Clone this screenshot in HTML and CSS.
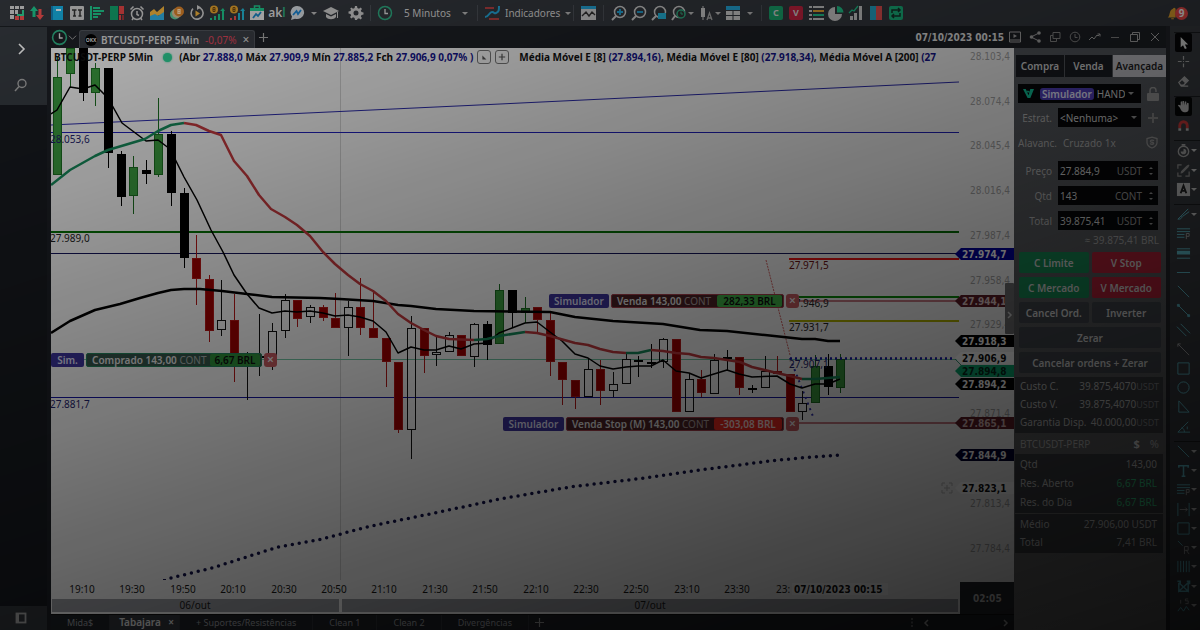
FILE: index.html
```html
<!DOCTYPE html>
<html lang="pt-BR">
<head>
<meta charset="utf-8">
<title>BTCUSDT-PERP 5Min</title>
<link rel="stylesheet" href="styles.css">
</head>
<body>
<header class="toolbar">
  <button class="tb" aria-label="Layout"><svg viewBox="0 0 16 16"><path fill="#cfcfcf" d="M1 1h4v3H1zM6 1h4v3H6zM11 1h4v3h-4zM1 5h4v4H1zM1 10h4v4H1zM6 5h3v4H6z"/><path fill="#2fcf95" d="M8 9h5v-4h2v6H8z"/><path fill="#ef4f4f" d="M6 11h4v4H6zM11 11h4v4h-4z"/></svg></button>
  <button class="tb" aria-label="Compra e venda"><svg viewBox="0 0 16 16"><path fill="#20c58c" d="M5 1l4 5H6.500v6h-3V6H1z"/><path fill="#ef4f4f" d="M11 15l4-5h-2.500V4h-3v6H7z"/></svg></button>
  <button class="tb" aria-label="Livro"><svg viewBox="0 0 16 16"><path fill="#18aee0" d="M2 1h12v14H2z"/><path fill="#1580b5" d="M2 1h2v14H2z"/><path fill="#e8f4fa" d="M7 4h5v2H7z"/></svg></button>
  <button class="tb" aria-label="Times and Trades"><svg viewBox="0 0 16 16"><rect x="1" y="1" width="14" height="14" rx="1" fill="#c9c9c9"/><path fill="none" stroke="#333" stroke-width="1.500" d="M3 5h4.500M9 5h4M5.500 5v6M11 5v6M4 11h3M9.500 11h3"/></svg></button>
  <button class="tb" aria-label="Volume"><svg viewBox="0 0 16 16"><path fill="#20c58c" d="M1 1h2v14H1zM4 2h7v2H4zM4 5h11v2H4zM4 8h8v2H4zM4 11h5v2H4z"/></svg></button>
  <button class="tb" aria-label="Mapa"><svg viewBox="0 0 16 16"><path fill="#12a06b" d="M1 1h8v14H1z"/><path fill="#e04545" d="M10 1h5v8h-5zM10 10h2v5h-2z"/><path fill="#9c3439" d="M13 10h2v5h-2z"/></svg></button>
  <button class="tb" aria-label="Alarme"><svg viewBox="0 0 16 16"><circle cx="8" cy="9" r="5.500" fill="none" stroke="#ccc" stroke-width="1.500"/><path fill="none" stroke="#ccc" stroke-width="1.500" d="M1.500 4.500l3-3M14.500 4.500l-3-3M3 15l1.500-2M13 15l-1.500-2M8 6v3.500l2 1"/></svg></button>
  <button class="tb" aria-label="Gráfico"><svg viewBox="0 0 16 16"><path fill="#f2b33d" d="M1 7l4-3 3 3 7-6v8L1 13z"/><path fill="#31aee0" d="M1 11l5-2 3 2 6-4v8H1z"/></svg></button>
  <button class="tb" aria-label="Moedas"><svg viewBox="0 0 16 16"><circle cx="6" cy="9.500" r="5" fill="#5fc79b"/><circle cx="8" cy="8" r="5" fill="#d8bd94"/><circle cx="10" cy="6.500" r="5" fill="#d9822a"/><path fill="none" stroke="#ffe2b8" stroke-width="1.200" d="M9 4.500h2v4H9zM9 6.500h2"/></svg></button>
  <button class="tb" aria-label="Replay"><svg viewBox="0 0 16 16"><path fill="none" stroke="#ccc" stroke-width="1.600" d="M9 2.200a6 6 0 1 1-5 1.500"/><path fill="#ccc" d="M8 0l4 2.300L8 5z"/><path fill="#f2b33d" d="M6.500 5.500l4.500 3-4.500 3z"/></svg></button>
  <button class="tb" aria-label="Ganhos"><svg viewBox="0 0 16 16"><circle cx="5" cy="4.500" r="4" fill="#e6a52e"/><path fill="none" stroke="#6b4710" d="M4 2.500h2v4H4zM4 4.500h2"/><path fill="#20c58c" d="M1 13h2v2H1zM5 11h2v4H5zM9 9h2v6H9zM13 5h2v10h-2zM11 6l3-3 2 3z"/></svg></button>
  <button class="tb" aria-label="Perdas"><svg viewBox="0 0 16 16"><circle cx="5" cy="4.500" r="4" fill="#e6a52e"/><path fill="none" stroke="#6b4710" d="M4 2.500h2v4H4zM4 4.500h2"/><path fill="#ef4f4f" d="M1 13h2v2H1zM5 11h2v4H5z"/><path fill="#24b7d3" d="M9 8h2v7H9zM13 5h2v10h-2zM11 6l3-3 2 3z"/></svg></button>
  <button class="tb" aria-label="Loja"><svg viewBox="0 0 16 16"><path fill="none" stroke="#20c58c" stroke-width="1.500" d="M5.500 3V1h5v2"/><rect x="1" y="3" width="14" height="12" fill="#e5e5e5"/><path fill="#20c58c" d="M1 3h14v3H1z"/><path fill="none" stroke="#1c86c5" stroke-width="1.800" d="M4 13l3-4 2 2 3-4"/></svg></button>
  <button class="tb tb-akl">ak<i>l</i></button>
  <button class="tb" aria-label="Chat"><svg viewBox="0 0 16 16"><path fill="#d7dde2" d="M8 1a7 6.500 0 1 1-2 12.700L2 15l1-3.500A6.500 6.500 0 0 1 8 1z"/><path fill="none" stroke="#1c86d5" stroke-width="1.800" d="M4 10l3.500-4L9 9l3-4"/></svg></button>
  <i class="caret"></i>
  <button class="tb" aria-label="Cursos"><svg viewBox="0 0 16 16"><path fill="#ccc" d="M8 2l8 4-8 4-8-4zM3 9l5 2.500L13 9v3c-2 3-8 3-10 0zM14 7h1v6h-1z"/></svg></button>
  <button class="tb tb-gear" aria-label="Configurações"><svg viewBox="0 0 16 16"><path fill="#ccc" fill-rule="evenodd" d="M7 1h2l.4 2 1.600.7L12.700 2.500l1.300 1.400-1.200 1.700.7 1.500 2 .4v2l-2 .4-.7 1.600 1.200 1.600-1.400 1.400-1.600-1.200-1.600.7L9 15H7l-.4-2-1.600-.7-1.600 1.200L2 12l1.200-1.500-.7-1.600-2-.4v-2l2-.4.7-1.500L2 3.900l1.400-1.400L5 3.700 6.600 3zM8 5.500a2.500 2.500 0 1 0 0 5 2.500 2.500 0 0 0 0-5z"/></svg></button>
  <span class="sep"></span>
  <button class="tb-period"><svg viewBox="0 0 16 16"><circle cx="8" cy="8" r="6.500" fill="none" stroke="#2fae83" stroke-width="1.500"/><path fill="none" stroke="#ddd" stroke-width="1.300" d="M8 4v4.500h3"/></svg><span>5 Minutos</span><i class="caret"></i></button>
  <span class="sep"></span>
  <button class="tb-ind"><svg viewBox="0 0 16 16"><path fill="none" stroke="#e04545" stroke-width="1.600" d="M1 3h9M5 14h10"/><path fill="none" stroke="#24a6d8" stroke-width="2" d="M1 12c4 0 4-5 7-5s1 2 4 1 3-3 3-7"/></svg><span>Indicadores</span><i class="caret"></i></button>
  <span class="sep"></span>
  <button class="tb" aria-label="Tela"><svg viewBox="0 0 16 16"><path fill="#d0d0d0" d="M1 1h15v14H1z"/><path fill="#24a6d8" d="M1 1h15v3H1z"/><path fill="none" stroke="#333" stroke-width="1.400" d="M2 11l4-4 3 4 3-4 3 3"/></svg></button>
  <span class="sep sep-wide"></span>
  <button class="tb" aria-label="Mais zoom"><svg viewBox="0 0 16 16"><circle cx="9" cy="7" r="5.500" fill="none" stroke="#ccc" stroke-width="1.500"/><path stroke="#ccc" stroke-width="2" d="M5 11l-4 4"/><path stroke="#24a6d8" stroke-width="1.800" d="M6 7h6M9 4v6"/></svg></button>
  <button class="tb" aria-label="Menos zoom"><svg viewBox="0 0 16 16"><circle cx="9" cy="7" r="5.500" fill="none" stroke="#ccc" stroke-width="1.500"/><path stroke="#ccc" stroke-width="2" d="M5 11l-4 4"/><path stroke="#24a6d8" stroke-width="1.800" d="M6 7h6"/></svg></button>
  <button class="tb" aria-label="Zoom de área"><svg viewBox="0 0 16 16"><circle cx="9" cy="7" r="5.500" fill="none" stroke="#ccc" stroke-width="1.500"/><path stroke="#ccc" stroke-width="2" d="M5 11l-4 4"/><path fill="#24b3d8" d="M7 8h8v6H7z"/></svg></button>
  <button class="tb" aria-label="Zoom de tempo"><svg viewBox="0 0 16 16"><circle cx="8" cy="7" r="5.500" fill="none" stroke="#ccc" stroke-width="1.500"/><path stroke="#ccc" stroke-width="2" d="M4 11l-3 4"/><circle cx="10" cy="9" r="4" fill="#333" stroke="#2fae83" stroke-width="1.500"/><path fill="none" stroke="#2fae83" d="M10 6.500V9h2"/></svg></button>
  <i class="caret tight"></i>
  <button class="tb" aria-label="Tipo de gráfico"><svg viewBox="0 0 16 16"><path fill="#ccc" d="M3 3h4v9H3zM4.500 1h1v14h-1z"/><path fill="none" stroke="#aaa" stroke-width="1.300" d="M9 15l2.500-7L14 15M10 13h3.500"/></svg></button>
  <i class="caret tight"></i>
  <button class="tb" aria-label="Grade"><svg viewBox="0 0 16 16"><path fill="#24a6d8" d="M1 1h14v4H1z"/><path fill="#d0d0d0" d="M1 6h6.500v4H1zM8.500 6H15v4H8.500zM1 11h6.500v4H1zM8.500 11H15v4H8.500z"/></svg></button>
  <i class="caret"></i>
  <span class="sep"></span>
  <button class="tb tb-box buy">C</button>
  <button class="tb tb-box sell">V</button>
  <button class="tb" aria-label="Lista"><svg viewBox="0 0 16 16"><path fill="#ccc" d="M1 1h3v2H1zM1 5h3v2H1zM1 9h3v2H1zM1 13h3v2H1zM5 1h11v2H5zM5 13h11v2H5z"/><path fill="#e6a52e" d="M5 5h11v2H5z"/><path fill="#20c58c" d="M5 9h11v2H5z"/></svg></button>
  <button class="tb" aria-label="Pizza"><svg viewBox="0 0 16 16"><path fill="#ccc" d="M7 2v7h7A7 7 0 1 1 7 2z"/><path fill="#20c58c" d="M9 1a6.500 6.500 0 0 1 6.500 6.500H9z"/></svg></button>
  <button class="tb" aria-label="Desempenho"><svg viewBox="0 0 16 16"><path fill="#ccc" d="M2 11h3v4H2zM6 8h3v7H6zM11 1h3v14h-3z"/><path fill="none" stroke="#20c58c" stroke-width="1.300" d="M1 8l3-3 2 1 4-5"/></svg></button>
  <button class="tb" aria-label="Book"><svg viewBox="0 0 16 16"><path fill="#24a6c8" d="M2 1h6v14H2z"/><path fill="#e04f4f" d="M8 1h6v14H8z"/></svg></button>
  <button class="tb" aria-label="Trocar"><svg viewBox="0 0 16 16"><rect x="1" y="1" width="14" height="14" rx="2" fill="#19b37c"/><path fill="none" stroke="#15332a" stroke-width="1.500" d="M4 8V5h8M12 8v3H4M10 3l2 2-2 2M6 9l-2 2 2 2"/></svg></button>
  <button class="bell" aria-label="9 notificações"><svg viewBox="0 0 16 16"><path fill="#e6a52e" d="M2 13c3-2 1-8 6-10 1-2 3-1 3 1v9zM6 14h3v1H6z"/></svg><b>9</b></button>
</header>

<div class="workspace">
  <nav class="rail">
    <button aria-label="Expandir"><svg viewBox="0 0 16 16"><path fill="none" stroke="#fff" stroke-width="1.600" d="M6 3l5 5-5 5"/></svg></button>
    <button aria-label="Buscar"><svg viewBox="0 0 16 16"><circle cx="9" cy="6.500" r="4" fill="none" stroke="#aaa" stroke-width="1.400"/><path stroke="#aaa" stroke-width="1.500" d="M6 9.500L2 14"/></svg></button>
    <button class="rail-foot" aria-label="Painel"><svg viewBox="0 0 16 16"><rect x="3.500" y="3.500" width="9" height="9" fill="none" stroke="#aaa" stroke-width="1.800"/><path stroke="#aaa" stroke-width="2" d="M5 3v10"/></svg></button>
  </nav>

  <main class="window">
    <div class="titlebar">
      <button class="clock" aria-label="Período"><svg viewBox="0 0 16 16"><circle cx="8" cy="8" r="6.500" fill="none" stroke="#2fae83" stroke-width="1.500"/><path fill="none" stroke="#ddd" stroke-width="1.300" d="M8 4v4.500h3"/></svg><svg class="chev" viewBox="0 0 10 10"><path fill="none" stroke="#aaa" d="M1 3l4 4 4-4"/></svg></button>
      <div class="doc-tab"><span class="okx">OKX</span><b>BTCUSDT-PERP 5Min</b><span class="neg">-0,07%</span><button aria-label="Fechar aba">×</button></div>
      <button class="plus" aria-label="Nova aba"><svg viewBox="0 0 10 10"><path stroke="#aaa" stroke-width="1.300" d="M5 0v10M0 5h10"/></svg></button>
      <time>07/10/2023 00:15</time>
      <div class="win-buttons">
        <button aria-label="Vídeo"><svg viewBox="0 0 12 12"><path fill="none" stroke="#aaa" d="M.5 1h11v10H.5zM0 9h12" /><path fill="#aaa" d="M4.500 3l3.500 2-3.500 2z"/></svg></button>
        <button aria-label="Compartilhar"><svg viewBox="0 0 12 12"><path fill="none" stroke="#aaa" d="M10 2L2 6l8 4"/><circle cx="10" cy="2" r="1.800" fill="#aaa"/><circle cx="2.500" cy="6" r="1.800" fill="#aaa"/><circle cx="10" cy="10" r="1.800" fill="#aaa"/></svg></button>
        <button aria-label="Duplicar"><svg viewBox="0 0 12 12"><path fill="none" stroke="#888" d="M4 1.500h7v6H4zM4 4.500H1.500v6h6v-3"/></svg></button>
        <button aria-label="Tempo"><svg viewBox="0 0 12 12"><circle cx="6" cy="6" r="4.800" fill="none" stroke="#888"/><path fill="none" stroke="#888" d="M6 3v3.500h2.500"/></svg></button>
        <button aria-label="Tendência"><svg viewBox="0 0 12 12"><path fill="none" stroke="#aaa" d="M0 9l3-3 2 2 3-4 1 1 2-2M8.500 3H11v2.500"/></svg></button>
        <button aria-label="Minimizar"><svg viewBox="0 0 12 12"><path stroke="#888" d="M2 6.500h8"/></svg></button>
        <button aria-label="Restaurar"><svg viewBox="0 0 12 12"><path fill="none" stroke="#aaa" d="M1.500 3.500h7v7h-7zM3.500 3.500v-2h7v7h-2"/></svg></button>
        <button aria-label="Fechar"><svg viewBox="0 0 12 12"><path stroke="#aaa" d="M2 2l8 8M10 2l-8 8"/></svg></button>
      </div>
    </div>

    <div class="window-body">
      <section class="chart-col">
        <div class="chart">
          <svg id="chart" class="chart-svg" viewBox="51 48 963 566" role="img" aria-label="Gráfico de candles"></svg>
          <div class="legend">
            <b>BTCUSDT-PERP 5Min</b><i class="dot"></i>
            <b>(Abr <em>27.888,0</em> Máx <em>27.909,9</em> Mín <em>27.885,2</em> Fch <em>27.906,9 0,07% )</em></b>
            <button aria-label="Recolher"><svg viewBox="0 0 10 10"><path fill="#555" d="M3 3l5 5H3z"/></svg></button><button aria-label="Adicionar"><svg viewBox="0 0 10 10"><path stroke="#555" stroke-width="1.500" d="M5 1v8M1 5h8"/></svg></button>
            <b class="avg">Média Móvel E [8] <em>(27.894,16)</em>, Média Móvel E [80] <em>(27.918,34)</em>, Média Móvel A [200] <em>(27</em></b>
          </div>
        </div>
        <footer class="sheets">
          <a href="#">Mida$</a>
          <a href="#" class="on">Tabajara <span>×</span></a>
          <a href="#">+ Suportes/Resistências</a>
          <a href="#">Clean 1</a>
          <a href="#">Clean 2</a>
          <a href="#">Divergências</a>
          <button aria-label="Nova planilha"><svg viewBox="0 0 10 10"><path stroke="#999" stroke-width="1.300" d="M5 0v10M0 5h10"/></svg></button>
          <span class="pager"><svg viewBox="0 0 10 10"><path stroke="#aaa" stroke-dasharray="2 1.500" d="M5 0v10"/></svg><svg viewBox="0 0 10 10"><path fill="none" stroke="#aaa" stroke-width="1.500" d="M7 2L4 5l3 3"/></svg><i></i><svg viewBox="0 0 10 10"><path fill="none" stroke="#aaa" stroke-width="1.500" d="M3 2l3 3-3 3"/></svg></span>
        </footer>
      </section>

      <aside class="panel">
        <div class="modes"><button>Compra</button><button>Venda</button><button class="on">Avançada</button></div>
        <div class="account">
          <div class="dark-box"><svg viewBox="0 0 12 12"><path fill="#11c39a" d="M0 1h3l3 7 1-3H5L4 3h2l1 1 1-3h4L8 11H5z"/></svg><mark>Simulador</mark><select aria-label="Conta"><option>HAND</option></select><i class="caret"></i></div>
          <button aria-label="Bloquear"><svg viewBox="0 0 12 14"><path fill="none" stroke="#999" stroke-width="1.500" d="M3 6V3.500a3 3 0 0 1 6 0V5"/><rect y="6" width="12" height="8" rx="1" fill="#999"/></svg></button>
        </div>
        <div class="field"><label for="est">Estrat.</label><div class="dark-box"><select id="est"><option>&lt;Nenhuma&gt;</option></select><i class="caret"></i></div><button aria-label="Nova estratégia"><svg viewBox="0 0 10 10"><path stroke="#888" stroke-width="2" d="M5 0v10M0 5h10"/></svg></button></div>
        <div class="leverage"><span>Alavanc.</span><span>Cruzado 1x</span><svg viewBox="0 0 12 12"><path fill="none" stroke="#999" stroke-width="1.300" d="M6 .7L11 2v4c0 3-2.500 4.500-5 5.500C3.500 10.500 1 9 1 6V2zM8 4.300c-1-1-4-.8-3.500.7.4 1 3.200.5 3.200 1.800s-2.700 1.200-3.700.2"/></svg></div>
        <div class="field"><label for="pr">Preço</label><div class="dark-box"><input id="pr" value="27.884,9"><span>USDT</span><i class="spin"></i></div></div>
        <div class="field"><label for="qt">Qtd</label><div class="dark-box"><input id="qt" value="143"><span>CONT</span><i class="spin"></i></div></div>
        <div class="field"><label for="tt">Total</label><div class="dark-box"><input id="tt" value="39.875,41"><span>USDT</span><i class="spin"></i></div></div>
        <p class="approx">≈ 39.875,41 BRL</p>
        <div class="actions">
          <button class="buy">C Limite</button><button class="sell">V Stop</button>
          <button class="buy">C Mercado</button><button class="sell">V Mercado</button>
          <button>Cancel Ord.</button><button>Inverter</button>
          <button class="wide">Zerar</button>
          <button class="wide">Cancelar ordens + Zerar</button>
        </div>
        <dl class="costs">
          <div><dt>Custo C.</dt><dd>39.875,4070<i>USDT</i></dd></div>
          <div><dt>Custo V.</dt><dd>39.875,4070<i>USDT</i></dd></div>
          <div><dt>Garantia Disp.</dt><dd>40.000,00<i>USDT</i></dd></div>
        </dl>
        <div class="asset"><span>BTCUSDT-PERP</span><button class="on">$</button><button>%</button></div>
        <dl class="costs result">
          <div><dt>Qtd</dt><dd>143,00</dd></div>
          <div><dt>Res. Aberto</dt><dd class="pos">6,67 BRL</dd></div>
          <div><dt>Res. do Dia</dt><dd class="pos">6,67 BRL</dd></div>
        </dl>
        <dl class="costs totals">
          <div><dt>Médio</dt><dd>27.906,00 USDT</dd></div>
          <div><dt>Total</dt><dd>7,41 BRL</dd></div>
        </dl>
      </aside>
    </div>
  </main>

  <nav class="tools">
    <div class="g3">
      <button class="on" aria-label="Cursor"><svg viewBox="0 0 16 16"><path fill="#ddd" d="M5 2l8 8H9.500l2 4-2 1-2-4L5 13z"/></svg></button>
      <button aria-label="Cruz"><svg viewBox="0 0 16 16"><path stroke="#aaa" stroke-width="1.300" d="M8 2v4M8 10v4M2 8h4M10 8h4M7.500 8h1"/></svg></button>
      <button aria-label="Borracha"><svg viewBox="0 0 16 16"><path fill="none" stroke="#aaa" stroke-width="1.400" d="M3 9l6-6 4 4-5 5H5zM5 13h8"/><path fill="#aaa" d="M6 6l4 4 3-3-4-4z"/></svg></button>
    </div>
    <div class="g2">
      <button class="on" aria-label="Mover"><svg viewBox="0 0 16 16"><path fill="#bbb" d="M4 9L2 7l1-1 2 1V3l1.500-.5L7 7V2h1.500v5L9.500 2.500 11 3v4l1-3 1.500.5V10c0 4-2 4-5 4-2 0-3-2-4.500-5z"/></svg></button>
      <button aria-label="Ímã"><svg viewBox="0 0 16 16"><path fill="none" stroke="#d03c3c" stroke-width="3" d="M4 11V8a4 4 0 0 1 8 0v3"/><path stroke="#bbb" stroke-width="3" d="M4 11v2.500M12 11v2.500"/></svg></button>
    </div>
    <div class="g3 more">
      <button aria-label="Cronômetro"><svg viewBox="0 0 16 16"><circle cx="8" cy="9" r="5.500" fill="none" stroke="#aaa" stroke-width="1.500"/><path fill="#aaa" d="M8 6a3 3 0 1 1-3 3h3zM6 1h4v2H6z"/></svg></button>
      <button aria-label="Desenhar"><svg viewBox="0 0 16 16"><path fill="none" stroke="#999" stroke-width="1.300" d="M2 6V2h4M2 10v4h4M14 9v5h-4M5 11L14 2" /><path stroke="#999" stroke-width="2.500" d="M6 10l7-7"/></svg></button>
      <button aria-label="Texto"><svg viewBox="0 0 16 16"><path fill="#c4c4c4" d="M1 1h14v14H1z"/><path fill="none" stroke="#222" stroke-width="2" d="M5 12l3-8 3 8M6 9.500h4"/></svg></button>
    </div>
    <div class="g12 teal">
      <button class="drop" aria-label="Pincel"><svg viewBox="0 0 16 16"><path d="M2 13c3 0 5-1 4-4L13 2M7 10l7-5M2 13l4-4"/></svg></button>
      <button aria-label="Níveis P"><svg viewBox="0 0 16 16"><path d="M1 3h14M1 6h14M1 9h8M1 12h8"/><path stroke="#aaa" d="M11 14V8h3v3h-3"/></svg></button>
      <button aria-label="Níveis"><svg viewBox="0 0 16 16"><path stroke-width="2" d="M1 6h14M1 8h14"/><path d="M1 3h14M1 13h14"/></svg></button>
      <button aria-label="Horizontal"><svg viewBox="0 0 16 16"><path d="M1 8h14"/></svg></button>
      <button aria-label="Linha"><svg viewBox="0 0 16 16"><path d="M2 2l12 12"/></svg></button>
      <button aria-label="Segmento"><svg viewBox="0 0 16 16"><path d="M2 2l12 12M1.500 1.500h2v2h-2zM12.500 12.500h2v2h-2z"/></svg></button>
      <button aria-label="Canal"><svg viewBox="0 0 16 16"><path d="M1 5l10 10M5 2l10 10"/></svg></button>
      <button aria-label="Seta"><svg viewBox="0 0 16 16"><path stroke="#aaa" d="M2 2l12 12M2 5V2h3"/></svg></button>
      <button aria-label="Retângulo"><svg viewBox="0 0 16 16"><path d="M2 2h12v12H2z"/></svg></button>
      <button aria-label="Círculo"><svg viewBox="0 0 16 16"><circle cx="8" cy="8" r="6"/></svg></button>
      <button aria-label="Triângulo"><svg viewBox="0 0 16 16"><path d="M3 2v12h11z"/></svg></button>
      <button aria-label="Ângulo"><svg viewBox="0 0 16 16"><path d="M13 3L2 14h13M6 9c2 1 3 3 3 5M12 8v3"/></svg></button>
    </div>
    <div class="g9 teal more">
      <button aria-label="Linhas"><svg viewBox="0 0 16 16"><path d="M2 2l12 12"/></svg></button>
      <button aria-label="Textos"><svg viewBox="0 0 16 16"><path stroke-width="1.600" d="M3 5V3h10v2M8 3v11M6 14h4"/></svg></button>
      <button aria-label="Fibonacci P"><svg viewBox="0 0 16 16"><path d="M1 3h14M1 6h14M1 9h8M1 12h8"/><path stroke="#aaa" d="M11 14V8h3v3h-3"/></svg></button>
      <button aria-label="Medida"><svg viewBox="0 0 16 16"><path d="M2 1v14M14 1v14"/><path stroke="#aaa" d="M4 8h8M10 6l2 2-2 2"/></svg></button>
      <button aria-label="Formas"><svg viewBox="0 0 16 16"><path d="M2 2h12v12H2z"/></svg></button>
      <button aria-label="Régua R"><svg viewBox="0 0 16 16"><path d="M2 1l5 5"/><path stroke="#aaa" d="M9 15V7h4v4H9M11 11l3 4"/></svg></button>
      <button aria-label="Ciclos"><svg viewBox="0 0 16 16"><path d="M2 2v12M5 2v12M8 2v12M11 2v12M14 2v12"/></svg></button>
      <button aria-label="Padrões"><svg viewBox="0 0 16 16"><path stroke-width="1.600" d="M3 4v9l10-9v9L3 4M3 13h10M1.500 2.500h3v3M11.500 2.500h3v3"/></svg></button>
      <button aria-label="Ondas"><svg viewBox="0 0 16 16"><path d="M2 14l3-4 3 4 3-5 3 4"/><path stroke="#aaa" d="M5 2v4M13 1h-3v2h3v3h-3"/></svg></button>
    </div>
  </nav>
</div>
<script src="chart.js"></script>
</body>
</html>
```
FILE: styles.css
```css
* { box-sizing: border-box; }
body {
  margin: 0;
  height: 100vh;
  display: flex;
  flex-direction: column;
  overflow: hidden;
  background: #1d2026;
  color: #d4d4d4;
  font: 10px/14px "Noto Sans", "Open Sans", sans-serif;
}
/* night veil over the whole workspace */
body::after {
  content: "";
  position: fixed;
  inset: 0;
  pointer-events: none;
  background: linear-gradient(162deg, rgba(0,0,0,.24), rgba(0,0,0,.84));
}
button { border: 0; padding: 0; background: none; color: inherit; font: inherit; display: flex; align-items: center; justify-content: center; white-space: nowrap; }
svg { display: block; }
a { color: inherit; text-decoration: none; }
.caret { border: 3px solid transparent; border-top-color: #bbb; border-bottom: 0; flex: none; }

.toolbar { display: flex; align-items: center; height: 26px; padding: 0 12px 0 9px; gap: 4px; background: #34383e; flex: none; }
.tb, .tb svg, .tb-period svg, .tb-ind svg { width: 16px; height: 16px; flex: none; }
.tb-akl { font-size: 12px; font-weight: 600; color: #ddd; }
.tb-akl i { color: #2fae83; font-style: normal; }
.toolbar > .caret { margin: 0 2px; }
.toolbar > .caret.tight { margin: 0 0 0 -3px; }
.tb-gear { margin-left: 5px; }
.sep { width: 1px; height: 16px; background: #4c5057; margin: 0 2px; flex: none; }
.sep-wide { margin: 0 3px; }
.tb-period { gap: 11px; width: 94px; justify-content: flex-start; }
.tb-ind { gap: 5px; width: 83px; justify-content: flex-start; }
.tb-period .caret, .tb-ind .caret { margin: 0 4px 0 auto; }
.tb-box { border-radius: 2px; font-weight: 700; font-size: 9px; width: 14px; height: 14px; margin: 0 1px; }
.tb-box.buy { background: #1aa46d; }
.tb-box.sell { background: #c52440; }
.bell { margin-left: auto; }
.bell svg { width: 14px; height: 14px; margin-right: -5px; }
.bell b { width: 13px; height: 13px; line-height: 13px; border-radius: 7px; background: #f04a4a; color: #fff; }

.workspace { flex: 1; display: flex; min-height: 0; }
.rail { width: 47px; display: flex; flex-direction: column; background: linear-gradient(#363b41 78px, #181b20 78px); border-top: 1px solid #1c1f24; flex: none; }
.rail button { height: 36px; padding: 8px 5px 0 0; }
.rail svg { width: 16px; height: 16px; }
.rail .rail-foot { margin-top: auto; height: 24px; padding: 0 5px 0 0; background: #33373c; }

.window { flex: 1; display: flex; flex-direction: column; min-width: 0; margin-left: 4px; }
.titlebar { height: 22px; display: flex; align-items: center; background: #1e2126; flex: none; }
.clock svg { width: 17px; height: 17px; }
.clock .chev { width: 9px; height: 9px; }
.doc-tab { align-self: flex-end; height: 18px; margin-left: 2px; padding: 0 5px; display: flex; align-items: center; gap: 4px; background: #3a3e45; border: 1px solid #50545b; border-bottom: 0; border-radius: 3px 3px 0 0; }
.doc-tab b { font-weight: 600; white-space: nowrap; }
.okx { width: 12px; height: 12px; border-radius: 50%; background: #000; color: #ddd; font-size: 5px; line-height: 12px; text-align: center; font-weight: 700; }
.neg { color: #e0465c; margin: 0 2px; }
.doc-tab button { font-size: 12px; }
.plus { margin-left: 4px; }
.plus svg, .sheets button svg { width: 9px; height: 9px; }
time { margin-left: auto; font: 700 10px "DejaVu Sans Condensed", "DejaVu Sans", sans-serif; color: #e4e4e4; white-space: nowrap; }
.win-buttons { display: flex; gap: 8px; padding: 0 5px 0 5px; }
.win-buttons svg { width: 12px; height: 12px; }
.window-body { flex: 1; display: flex; min-height: 0; }
.chart-col { flex: 1; display: flex; flex-direction: column; min-width: 0; }
.chart { flex: 1; position: relative; min-height: 0; background: #f2f2f2; }
.chart-svg { width: 100%; height: 100%; }
.legend { position: absolute; top: 1px; left: 3px; right: 55px; display: flex; align-items: center; gap: 4px; height: 16px; overflow: hidden; white-space: nowrap; color: #111; }
.legend b { font-weight: 700; }
.legend em { font-style: normal; color: #14148a; }
.dot { width: 9px; height: 9px; margin: 0 3px 0 6px; border-radius: 50%; background: #2fcf95; box-shadow: 0 0 2px #2fcf95; flex: none; }
.legend button { width: 14px; height: 14px; border: 1px solid #777; border-radius: 3px; flex: none; }
.legend button svg { width: 8px; height: 8px; }
.legend .avg { margin-left: 6px; }
.sheets { height: 16px; display: flex; align-items: center; background: #1f2227; border-top: 1px solid #111; color: #9a9da2; font-size: 9px; flex: none; }
.sheets a { padding: 0 16px; height: 15px; line-height: 15px; border-right: 1px solid #2f3237; white-space: nowrap; }
.sheets .on { background: #33363c; color: #e0e0e0; font-size: 10px; font-weight: 600; padding: 0 5px 0 9px; }
.sheets .on span { margin-left: 5px; }
.sheets button { margin-left: 6px; }
.pager { margin-left: auto; display: flex; gap: 4px; padding-right: 3px; }
.pager svg { width: 10px; height: 10px; }
.pager i { width: 62px; }

.panel { width: 152px; padding-top: 7px; flex: none; overflow: hidden; display: flex; flex-direction: column; background: linear-gradient(#55595f, #5a5b5d 60%, #6c6c6c); }
.modes { display: grid; grid-template-columns: 48px 47px 1fr; gap: 1px; margin: 0 0 7px 2px; }
.modes button { height: 22px; background: #1b1e24; font-weight: 600; }
.modes .on { background: #c4c4ca; color: #1d1d22; }
.dark-box { background: #07080a; display: flex; align-items: center; height: 19px; min-width: 0; }
.account { display: flex; align-items: center; margin: 0 7px 5px 4px; gap: 6px; }
.account .dark-box { flex: 1; padding: 0 5px; gap: 3px; }
.account .dark-box svg { width: 11px; height: 11px; margin-right: 3px; }
.account button svg { width: 12px; height: 14px; }
mark { background: #5140bd; color: #e8e8ff; border-radius: 3px; padding: 0 2px; line-height: 12px; font-weight: 600; }
select, input { appearance: none; border: 0; background: none; color: #d2d2d2; font: inherit; padding: 0; min-width: 0; width: 0; flex: 1; }
.field { display: flex; align-items: center; margin: 0 8px 6px 0; }
.field label { width: 41px; text-align: right; padding-right: 3px; margin-right: 3px; color: #b4b4b4; flex: none; }
.field .dark-box { flex: 1; padding: 0 2px; }
.field .dark-box span { color: #9e9e9e; margin-right: 7px; }
.field button { margin-left: 7px; }
.field button svg { width: 10px; height: 10px; }
.field .dark-box .caret, .account .caret { border-top-color: #999; margin-right: 2px; }
.spin { display: grid; gap: 4px; margin-right: 3px; }
.spin::before, .spin::after { content: ""; border: 2px solid transparent; }
.spin::before { border-top: 0; border-bottom-color: #999; }
.spin::after { border-bottom: 0; border-top-color: #999; }
.leverage { display: flex; gap: 6px; margin: 3px 8px 11px 4px; color: #b0b0b0; }
.leverage svg { width: 12px; height: 13px; margin-left: auto; }
.approx { margin: -3px 7px 5px; text-align: right; color: #a8a8a8; }
.actions { display: grid; grid-template-columns: 1fr 1fr; gap: 4px 3px; padding: 0 5px; }
.actions button { height: 21px; border-radius: 2px; background: #42464d; color: #d6d6d6; font-weight: 600; }
.actions .buy { background: #178a55; }
.actions .sell { background: #b62239; }
.actions .wide { grid-column: 1 / -1; }
.costs { margin: 4px 3px 0 1px; padding: 0 4px 2px 5px; background: #3b3d41; color: #bcbcbc; }
.costs div { display: flex; justify-content: space-between; height: 18px; align-items: center; }
.costs dd { margin: 0; }
.costs i { font-style: normal; font-size: 9px; color: #85878c; }
.asset { display: flex; align-items: center; height: 21px; padding: 0 7px 0 6px; color: #b4b4b4; }
.asset span { margin-right: auto; }
.asset button { margin-left: 10px; font-size: 11px; }
.asset .on { font-weight: 700; color: #ddd; }
.costs.result, .costs.totals { margin-top: 0; padding-right: 6px; }
.result div { height: 19px; }
.costs.totals { border-top: 1px solid #6a6a6a; padding-top: 1px; }
.costs .pos { color: #34cc86; }

.tools { width: 34px; padding: 6px 0 15px 4px; display: flex; flex-direction: column; gap: 5px; background: #393c41; border-left: 4px solid #24262b; flex: none; }
.tools div { display: flex; flex-direction: column; flex: 1 1 0; border-top: 1px solid #1b1d20; min-height: 0; }
.tools .g2 { flex-grow: 2; }
.tools .g3 { flex-grow: 3; }
.tools .g9 { flex-grow: 9; }
.tools .g12 { flex-grow: 12; }
.tools button { flex: 1; width: 17px; margin-left: 1px; position: relative; min-height: 0; }
.tools .on { background: #060708; border-radius: 2px; }
.tools svg { width: 15px; height: 15px; }
.teal svg { fill: none; stroke: #62c4d4; }
.more button::after, .tools .drop::after { content: ""; position: absolute; left: 16px; border: 3px solid transparent; border-top-color: #ccc; border-bottom: 0; }

/* chart drawing */
.ax { font: 10px "DejaVu Sans Condensed", "DejaVu Sans", sans-serif; fill: #a3a3a3; text-anchor: end; }
.tag { font: 700 10px "DejaVu Sans Condensed", "DejaVu Sans", sans-serif; }
.tick { font: 10px "Noto Sans", sans-serif; fill: #1a1a1a; text-anchor: middle; }
.lv { font: 10px "Noto Sans", sans-serif; }
.line { fill: none; stroke-linejoin: round; }
.order { display: flex; gap: 2px; height: 14px; font-size: 10px; font-weight: 600; line-height: 12px; white-space: nowrap; }
.order > span { border-radius: 2px; height: 14px; }
.order .who { background: #3d349b; color: #dcdcf0; padding: 1px 0; text-align: center; }
.order .what { flex: 1; display: flex; justify-content: space-between; border: 1px solid; padding: 0 1px 0 5px; color: #e2e2e2; }
.order .what i { font-style: normal; font-weight: 400; opacity: .65; }
.order .what b { font-weight: 600; text-align: center; border-radius: 2px; color: #0e0e0e; }
.order.long .what { background: #35554a; border-color: #23805a; }
.order.short .what { background: #4d2226; border-color: #a53f4c; }
.order.long b { background: #2f8f3a; }
.order.gain b { background: #41b449; }
.order.loss b { background: #e8281f; color: #f5d7d7; }
.order button { width: 13px; height: 14px; border-radius: 3px; background: #c45b60; color: #eee; font-size: 12px; line-height: 12px; flex: none; }
```
FILE: chart.js
```js
// x, open/close top, bottom, wick top, wick bottom, kind (g green, k black, r red, w hollow)
const candles = [
  [57, 77, 175, 57, 175, "g"], [70, 48, 74, 48, 88, "g"], [83, 48, 93, 48, 101, "k"], [95, 68, 93, 63, 106, "g"],
  [108, 68, 153, 68, 168, "k"], [121, 154, 197, 151, 206, "k"], [133, 167, 196, 156, 214, "g"], [146, 170, 174, 160, 184, "k"],
  [158, 134, 175, 98, 177, "g"], [171, 134, 193, 131, 206, "k"], [184, 193, 258, 188, 268, "k"], [196, 258, 279, 235, 305, "r"],
  [209, 279, 331, 275, 342, "r"], [221, 320, 330, 280, 336, "w"], [234, 320, 357, 294, 382, "r"], [247, 356, 357, 352, 400, "w"],
  [259, 356, 357, 314, 376, "w"], [272, 331, 356, 323, 370, "w"], [285, 300, 331, 294, 338, "w"], [297, 300, 319, 300, 327, "r"],
  [310, 307, 317, 305, 323, "w"], [323, 307, 318, 305, 321, "r"], [335, 318, 328, 293, 328, "r"], [348, 307, 328, 301, 356, "w"],
  [360, 307, 328, 278, 335, "r"], [373, 328, 338, 290, 338, "r"], [386, 338, 362, 338, 387, "r"], [398, 362, 430, 362, 433, "r"],
  [411, 328, 430, 316, 459, "w"], [424, 328, 356, 328, 373, "r"], [436, 352, 355, 336, 366, "w"], [449, 335, 352, 332, 352, "w"],
  [461, 335, 356, 335, 356, "r"], [474, 324, 357, 323, 367, "w"], [487, 324, 345, 321, 360, "k"], [499, 290, 344, 284, 344, "g"],
  [512, 290, 313, 290, 328, "k"], [525, 308, 313, 297, 323, "g"], [537, 307, 320, 307, 332, "r"], [550, 320, 362, 312, 376, "r"],
  [562, 362, 380, 362, 405, "r"], [575, 380, 397, 380, 409, "r"], [588, 369, 397, 358, 397, "w"], [600, 369, 391, 360, 405, "r"],
  [613, 384, 391, 372, 397, "w"], [626, 359, 384, 354, 384, "w"], [638, 360, 362, 356, 377, "k"], [651, 362, 363, 344, 368, "k"],
  [663, 339, 362, 338, 368, "w"], [676, 339, 412, 339, 412, "r"], [689, 379, 412, 373, 412, "w"], [701, 379, 393, 370, 397, "r"],
  [714, 360, 394, 354, 394, "w"], [727, 357, 358, 350, 370, "k"], [739, 357, 388, 357, 395, "r"], [752, 388, 389, 385, 393, "k"],
  [765, 371, 388, 356, 388, "w"], [777, 371, 374, 356, 374, "r"], [790, 374, 412, 374, 412, "r"], [802, 403, 412, 391, 420, "w"],
  [815, 366, 403, 355, 403, "g"], [828, 366, 387, 354, 395, "k"], [840, 359, 388, 354, 393, "g"]
];
const tone = { g: ["#3b9a3f", "#1c6e22"], k: ["#000", "#000"], r: ["#a00000", "#b41818"], w: ["none", "#111"] };

const fast = "51,114 57,110 70,87 83,89 95,85 108,98 122,123 146,141 158,140 170,149 184,177 197,200 211,230 223,252 234,275 247,294 259,308 272,313 285,311 297,312 310,311 323,313 335,316 348,315 360,317 373,321 386,332 398,353 411,347 424,350 436,350 449,346 461,349 474,344 487,343 499,333 512,328 525,323 537,322 550,332 562,341 575,354 588,358 600,366 613,369 626,367 638,366 651,366 663,360 676,371 689,373 701,378 714,374 727,370 739,374 752,377 777,376 790,384 802,388 815,384 828,384 840,379";
const slow = "51,333 70,321 95,310 120,304 140,298 158,293 171,290 184,289 200,289 222,291 247,294 272,297 320,298 340,299 373,301 398,305 411,306 436,309 474,311 550,312 575,317 613,321 663,324 700,330 727,331 765,335 802,339 815,339 828,341 840,341";
const trend = [
  ["g", "51,185 70,170 95,156 108,150 145,139 158,131 171,125 184,123"],
  ["r", "184,123 196,125 209,131 221,135 234,161 247,176 259,195 271,209 285,217 297,225 310,236 323,252 335,264 348,275 360,284 373,291 386,301 398,314 411,323 424,330 436,336 449,339 474,340"],
  ["g", "474,340 487,339 499,336 525,332"],
  ["r", "525,332 537,333 550,336 575,343 588,345 600,349 613,352 626,353"],
  ["g", "626,353 638,353 651,350"],
  ["r", "651,350 663,351 676,353 689,354 701,357 714,358 727,360 740,362 752,367 777,373 790,376 802,379"],
  ["g", "802,379 815,379 840,377"]
];
const longAverage = "171,578 212,568 278,547 318,540 371,526 430,514 500,499 570,487 645,478 700,470 770,461 800,458 842,455";

const line = (x1, y1, x2, y2, color, width = 1, extra = "") =>
  `<line x1="${x1}" y1="${y1}" x2="${x2}" y2="${y2}" stroke="${color}" stroke-width="${width}" ${extra}/>`;
const poly = (points, color, width, extra = "") =>
  `<polyline class="line" points="${points}" stroke="${color}" stroke-width="${width}" ${extra}/>`;
const text = (x, y, cls, content, fill) => `<text x="${x}" y="${y}" class="${cls}" ${fill ? `fill="${fill}"` : ""}>${content}</text>`;

let out = line(340.5, 48, 340.5, 580, "#cccccc");
out += poly("51,125 500,104 959,82", "#2a2aa8", 1);
out += line(51, 132.5, 959, 132.5, "#2020b8") + line(51, 232, 959, 232, "#067006", 2);
out += line(51, 253.500, 959, 253.500, "#14145a") + line(51, 359.500, 958, 359.500, "#6fc0a0") + line(51, 397.500, 959, 397.500, "#1414a0");
out += line(789, 259, 959, 259, "#ef1616", 2) + line(789, 297, 959, 297, "#0a8a0a", 2) + line(789, 321, 959, 321, "#b4b400", 2);
out += line(798, 301, 958, 301, "#c77b84", 2) + line(798, 423, 958, 423, "#c77b84", 2);
out += line(766, 260, 790, 355, "#d06060", 1, 'stroke-dasharray="2 1"') + line(790, 358, 814, 419, "#3030b0", 2, 'stroke-dasharray="2 4"');
out += poly("955,359 962,366", "#3a9a78", 1);

for (const [x, top, bottom, high, low, kind] of candles) {
  const [fill, stroke] = tone[kind];
  if (high < top) out += line(x + .5, high, x + .5, top, stroke);
  if (low > bottom) out += line(x + .5, bottom, x + .5, low, stroke);
  out += `<rect x="${x - 3.5}" y="${top + .5}" width="8" height="${Math.max(bottom - top - 1, 1)}" fill="${fill}" stroke="${stroke}"/>`;
}
out += poly(slow, "#000", 2.5) + poly(fast, "#000", 1.5);
for (const [kind, points] of trend) out += poly(points, kind === "g" ? "#16895a" : "#c13a3e", 2.5);
out += line(163, 579.500, 166, 579.500, "#11114a") + poly(longAverage, "#11114a", 3.5, 'stroke-linecap="round" stroke-dasharray="0 7"');
out += line(790, 358.500, 955, 358.500, "#1818b0", 2.5, 'stroke-dasharray="2 3"');

out += text(50, 143, "lv", "28.053,6", "#22226a") + text(50, 242, "lv", "27.989,0", "#222") + text(50, 408, "lv", "27.881,7", "#22226a");
out += text(789, 269, "lv", "27.971,5", "#6a1010") + text(789, 307, "lv", "27.946,9", "#222") + text(789, 331, "lv", "27.931,7", "#222") + text(789, 368, "lv", "27.907,1", "#22226a");

[["28.103,4", 56], ["28.074,4", 101], ["28.045,4", 145], ["28.016,4", 190], ["27.987,4", 235], ["27.958,4", 280], ["27.929,4", 324], ["27.871,4", 413], ["27.813,4", 503], ["27.784,4", 548]]
  .forEach(([label, y]) => out += text(1010, y + 4, "ax", label));
[["27.974,7", 254, "#0000a0", "#fff"], ["27.944,1", 301, "#5e1d26", "#e0c8c8"], ["27.918,3", 341, "#000", "#fff"], ["27.906,9", 358, "#fff", "#111"],
 ["27.894,8", 371, "#0aa870", "#06281a"], ["27.894,2", 384, "#000", "#fff"], ["27.865,1", 423, "#5e1d26", "#d8b8b8"], ["27.844,9", 455, "#00002e", "#fff"], ["27.823,1", 488, "#fff", "#111"]]
  .forEach(([label, y, bg, fg]) => {
    out += `<polygon points="955,${y} 961,${y - 6} 1014,${y - 6} 1014,${y + 6} 961,${y + 6}" fill="${bg}"/>` + text(962, y + 4, "tag", label, fg);
  });
out += `<path d="M942 486v-3h3M949 483h3v3M952 490v3h-3M945 493h-3v-3M944 488h6M947 485v6" fill="none" stroke="#b5b5b5"/>`;
out += `<rect x="1005" y="283" width="9" height="51" rx="1" fill="#6e6e70"/><path d="M1008 312l3 3-3 3" fill="none" stroke="#ccc" stroke-width="1.500"/>`;

["19:10", "19:30", "19:50", "20:10", "20:30", "20:50", "21:10", "21:30", "21:50", "22:10", "22:30", "22:50", "23:10", "23:30"]
  .forEach((label, i) => out += text(Math.round(82 + i * 50.4), 593, "tick", label));
out += text(783, 593, "tick", "23:") + `<rect x="792" y="583" width="96" height="12" fill="#fff"/>` + text(794, 593, "tag", "07/10/2023 00:15", "#111");
out += `<rect x="52" y="599" width="287" height="13" fill="#9a9ca2"/><rect x="342" y="599" width="616" height="13" fill="#9a9ca2"/>`;
out += text(195, 609, "tick", "06/out") + text(650, 609, "tick", "07/out");
out += `<rect x="960" y="582" width="54" height="32" fill="#272a2f"/>` + text(973, 602, "tag", "02:05", "#ccc");

const order = (x, y, width, cls, who, whoWidth, what, value, valueWidth) =>
  `<foreignObject x="${x}" y="${y - 7}" width="${width}" height="14"><div class="order ${cls}"><span class="who" style="width:${whoWidth}px">${who}</span><span class="what"><span>${what} <i>CONT</i></span><b style="width:${valueWidth}px">${value}</b></span><button aria-label="Cancelar">×</button></div></foreignObject>`;
out += order(51, 360, 226, "long", "Sim.", 33, "Comprado 143,00", "6,67 BRL", 50);
out += order(549, 301, 250, "short gain", "Simulador", 60, "Venda 143,00", "282,33 BRL", 65);
out += order(503, 424, 296, "short loss", "Simulador", 61, "Venda Stop (M) 143,00", "-303,08 BRL", 68);

document.getElementById("chart").innerHTML = out;
```
